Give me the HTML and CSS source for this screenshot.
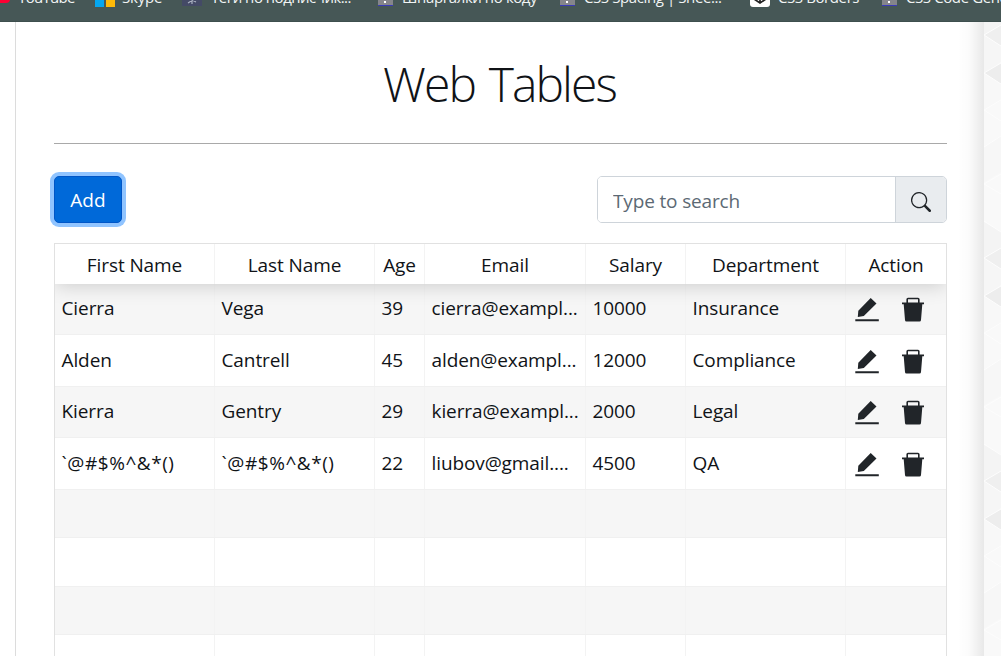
FILE: index.html
```html
<!DOCTYPE html>
<html lang="en">
<head>
<meta charset="utf-8">
<title>Web Tables</title>
<link rel="stylesheet" href="styles.css">
<script src="app.js" defer></script>
</head>
<body>
<nav class="bookmarks">
  <div class="bookmark-list">
    <span class="bookmark"><i class="fav fav-red"></i><span class="t-yt">YouTube</span></span>
    <span class="bookmark"><i class="fav fav-ms"></i><span class="t-sk">Skype</span></span>
    <span class="bookmark"><i class="fav fav-tag"><svg width="20" height="20" viewBox="0 0 20 20"><path d="M10 9v9M6 17l8-5M6 12l8 4" stroke="#aab0c0" stroke-width="1.2"/></svg></i><span class="t-tag">Теги по подписчик...</span></span>
    <span class="bookmark"><i class="fav fav-grey"></i><span class="t-code">Шпаргалки по коду</span></span>
    <span class="bookmark"><i class="fav fav-grey"></i><span class="t-space">CSS Spacing | Shee...</span></span>
    <span class="bookmark"><i class="fav fav-white"><svg width="20" height="20" viewBox="0 0 20 20"><path d="M4 9v4l6 4 6-4V9M10 4v12M5 13l5-3 5 3" fill="none" stroke="#222" stroke-width="1.7"/></svg></i><span class="t-border">CSS Borders</span></span>
    <span class="bookmark"><i class="fav fav-grey"></i><span class="t-gen">CSS Code Gener...</span></span>
  </div>
</nav>
<div class="page">
  <main class="content">
    <h1 class="title"><span>Web Tables</span></h1>
    <div class="toolbar">
      <button class="add">Add</button>
      <div class="search">
        <input class="search-input" placeholder="Type to search">
        <span class="search-button"><svg width="20" height="20" viewBox="0 0 16 16"><path fill="#212529" d="M11.742 10.344a6.5 6.5 0 1 0-1.397 1.398h-.001c.03.04.062.078.098.115l3.85 3.85a1 1 0 0 0 1.415-1.414l-3.85-3.85a1.007 1.007 0 0 0-.115-.1zM12 6.5a5.5 5.5 0 1 1-11 0 5.5 5.5 0 0 1 11 0z"/></svg></span>
      </div>
    </div>
    <div class="table" id="table">
      <div class="row head"><div>First Name</div><div>Last Name</div><div>Age</div><div>Email</div><div>Salary</div><div>Department</div><div>Action</div></div>
    </div>
  </main>
  <aside class="backdrop">
    <svg width="17" height="634">
      <defs>
        <pattern id="tri" width="17" height="223" patternUnits="userSpaceOnUse">
          <rect width="17" height="223" fill="#f9f9f9"/>
          <path d="M0 13 17 3V24Z" fill="#efefef"/>
          <path d="M0 13 17 24V40L0 51Z" fill="#f6f6f6"/>
          <path d="M0 51 17 41V62Z" fill="#ededed"/>
          <path d="M0 51 17 62V78L0 88Z" fill="#f8f8f8"/>
          <path d="M0 125 17 114V150L0 160Z" fill="#f7f7f7"/>
          <path d="M0 200 17 210V223H0Z" fill="#f4f4f4"/>
          <path d="M0 0H17V3L0 13Z" fill="#f4f4f4"/>
          <path d="M0 13 17 3M0 13 17 24M0 51 17 41M0 51 17 62M0 88 17 78M0 88 17 99M0 125 17 114M0 162 17 152M0 162 17 172M0 199 17 210" stroke="#fdfdfd" fill="none"/>
        </pattern>
      </defs>
      <rect width="17" height="634" fill="url(#tri)"/>
    </svg>
  </aside>
</div>
</body>
</html>
```
FILE: styles.css
```css
* { box-sizing: border-box; }
body { margin: 0; height: 656px; overflow: hidden; background: #fff; color: #101317; font-family: "Open Sans", "Noto Sans", sans-serif; font-size: 19px; letter-spacing: -.1px; }
.bookmarks { height: 22px; overflow: hidden; background: #465756; border-bottom: 1px solid #3e4f4e; }
.bookmark-list { display: grid; grid-template-columns: 105px 87px 196px 182px 190px 132px 160px; margin: -14px 0 0 -10px; color: #f1f4f4; font-size: 15px; line-height: 23px; font-weight: 500; letter-spacing: -.4px; }
.bookmark { display: flex; white-space: nowrap; }
.fav { flex: none; width: 20px; height: 20px; margin-right: 8px; overflow: hidden; }
.fav svg { display: block; }
.fav-red { height: 17px; background: #ff0033; border-radius: 4px; }
.fav-ms { height: 21px; margin-right: 7px; background: linear-gradient(90deg, #05a6f0 0 9px, #465756 9px 11px, #ffba08 11px); }
.fav-tag { margin-right: 9px; background: #444a66; }
.fav-grey { width: 15px; height: 20px; margin-right: 9px; background: radial-gradient(circle at 7px 16px, #fff 0 1px, rgba(255,255,255,0) 1.5px) no-repeat #85858b; border-bottom: 1px solid #3a3ab8; }
.fav-white { height: 21px; background: #fff; border-radius: 3px; }
.t-yt { letter-spacing: -.7px; }
.t-sk { letter-spacing: -.2px; }
.t-tag { letter-spacing: -.5px; }
.page { display: grid; grid-template-columns: 984px 17px; height: 634px; }
.content { height: 634px; margin-left: 15px; padding: 0 37px 0 38px; border-left: 1px solid #dcdcdc; background: linear-gradient(90deg, transparent calc(100% - 26px), rgba(0,0,0,.015) calc(100% - 15px), rgba(0,0,0,.09)); }
.title { display: flex; justify-content: center; align-items: center; height: 122px; margin: 0; padding: 2px 2px 0 0; border-bottom: 1px solid #a9a9a9; font-size: 48px; line-height: 60px; font-weight: 300; letter-spacing: -1.6px; word-spacing: 3px; }
.title span { letter-spacing: -1.9px; }
.toolbar { display: flex; justify-content: space-between; padding-top: 32px; height: 99px; }
.add { width: 68px; height: 47px; padding: 0; border: 1px solid #0056c7; border-radius: 5px; background: #0069d9; color: #fff; box-shadow: 0 0 0 4px #90c4ff; font: inherit; letter-spacing: .1px; }
.search { display: flex; width: 350px; height: 47px; border: 1px solid #ced4da; border-radius: 5px; overflow: hidden; }
.search-input { width: 297px; padding: 2px 15px 0; border: 0; outline: 0; color: #6c757d; font: inherit; letter-spacing: -.15px; background: #fff; }
.search-input::placeholder { color: #5c6974; opacity: 1; }
.search-button { flex: 1; border-left: 1px solid #ced4da; background: #e9ecef; padding: 15px 0 0 15px; }
.search-button svg { display: block; }
.table { height: 440px; width: 893px; border: 1px solid #e1e1e1; border-bottom: 0; overflow: hidden; }
.row { display: grid; grid-template-columns: 160px 160px 50px 161px 100px 160px 100px; background: #fff; }
.row > div { border-right: 1px solid #f3f3f3; padding: 0 6.5px; overflow: hidden; white-space: nowrap; }
.row > div:last-child { border-right: 0; }
.row.head { height: 40px; line-height: 43px; text-align: center; position: relative; box-shadow: 0 2px 19px rgba(0,0,0,.17); }
.row.head > div { padding: 0; }
.body-row { border-bottom: 1px solid #f0f0f0; line-height: 49px; }
.body-row:nth-child(even) { background: #f6f6f6; }
.row.h51 { height: 51px; }
.row.h52 { height: 52px; line-height: 51px; }
.row.h48 { height: 48px; }
.row.h49 { height: 49px; }
.symbols { letter-spacing: .55px; }
.row .actions { display: flex; align-items: center; padding: 0 0 0 7px; gap: 22px; }
.actions svg { flex: none; }
```
FILE: app.js
```js
const people = [
  ["Cierra", "Vega", "39", "cierra@exampl...", "10000", "Insurance"],
  ["Alden", "Cantrell", "45", "alden@exampl...", "12000", "Compliance"],
  ["Kierra", "Gentry", "29", "kierra@exampl...", "2000", "Legal"],
  ["`@#$%^&*()", "`@#$%^&*()", "22", "liubov@gmail....", "4500", "QA"]
];
const heights = [51, 52, 51, 52, 48, 49, 48, 49];
const icons = '<svg width="26" height="26" viewBox="0 0 26 26"><path fill="#212529" d="M17.7 2 23.5 7.6 10.8 20 4.8 21 5.3 14.8ZM2.3 23.3h23.5v2H2.3z"/></svg>' +
  '<svg width="24" height="26" viewBox="0 0 24 26"><path d="M6.2 7V3.2Q6.2 2.5 7 2.5h10q.8 0 .8.7V7" fill="none" stroke="#212529" stroke-width="1.6"/><path fill="#212529" d="M1 6.5h22v1.8h-1.7L20 24q-.1 1.5-1.5 1.5h-13Q4 25.5 4 24L2.7 8.3H1z"/></svg>';
const table = document.getElementById("table");
heights.forEach((h, i) => {
  const row = document.createElement("div");
  row.className = "row body-row h" + h;
  const data = people[i] || ["", "", "", "", "", ""];
  data.forEach(value => {
    const cell = document.createElement("div");
    cell.textContent = value;
    if (value.startsWith("`")) cell.className = "symbols";
    row.append(cell);
  });
  const actions = document.createElement("div");
  actions.className = "actions";
  if (people[i]) actions.innerHTML = icons;
  row.append(actions);
  table.append(row);
});
```
